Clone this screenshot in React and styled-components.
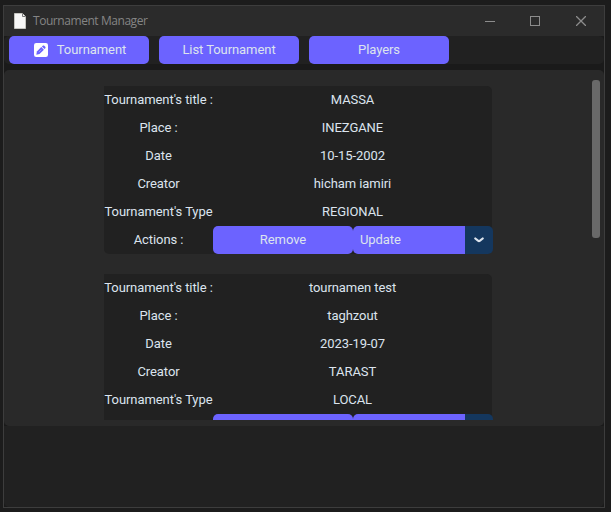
import React from "react";
import styled, { createGlobalStyle } from "styled-components";

const GlobalStyle = createGlobalStyle`
  * { box-sizing: border-box; }
  body { margin: 0; background: #1c1c1c; overflow: hidden; }
`;

const Desktop = styled.div`
  width: 611px;
  height: 512px;
  padding: 5px 6px 4px 3px;
  background: #1c1c1c;
`;

const AppWindow = styled.div`
  width: 602px;
  height: 503px;
  border: 1px solid #3d3d3d;
  background: #1a1a1a;
  display: flex;
  flex-direction: column;
  font: 13px/28px Roboto, sans-serif;
  letter-spacing: -0.07px;
  color: #dce4ee;
`;

const TitleBar = styled.header`
  flex: 0 0 30px;
  display: flex;
  align-items: center;
  padding-left: 10px;
  background: #2b2b2b;
`;

const Title = styled.span`
  margin-left: 7px;
  flex: 1;
  font: 12px/28px "Open Sans", sans-serif;
  letter-spacing: -0.44px;
  color: #858585;
`;

const WindowButton = styled.div`
  width: 46px;
  height: 28px;
  display: flex;
  align-items: center;
  justify-content: center;
  &:first-of-type { padding-left: 1px; }
`;

const Toolbar = styled.nav`
  flex: 0 0 28px;
  display: flex;
  gap: 10px;
  padding-left: 5px;
  background: #212121;
  border-radius: 5px;
`;

const Button = styled.div`
  width: ${(p) => p.$width || 140}px;
  height: 28px;
  display: flex;
  align-items: center;
  justify-content: ${(p) => (p.$align === "left" ? "flex-start" : "center")};
  gap: 9px;
  padding-left: ${(p) => (p.$align === "left" ? 7 : 0)}px;
  background: #6c63ff;
  border-radius: ${(p) => p.$radius || "5px"};
  line-height: 28px;
  white-space: pre;
`;

const IconButton = styled(Button)`
  padding-left: 2px;
`;

const ListPanel = styled.main`
  flex: 0 0 356px;
  margin-top: 6px;
  display: flex;
  justify-content: space-between;
  padding: 10px 4px 6px 100px;
  background: #292929;
  border-radius: 5px;
`;

const Viewport = styled.div`
  width: 389px;
  height: 340px;
  padding-top: 6px;
  overflow: hidden;
`;

const Card = styled.section`
  width: 388px;
  height: 168px;
  margin-bottom: 20px;
  display: grid;
  grid-template-columns: 109px 280px;
  grid-auto-rows: 28px;
  background: #212121;
  border-radius: 0 5px 5px 5px;
`;

const Cell = styled.div`
  text-align: center;
  white-space: nowrap;
`;

const Value = styled(Cell)`
  width: 279px;
`;

const Actions = styled.div`
  display: flex;
`;

const MenuArrow = styled.div`
  width: 28px;
  height: 28px;
  display: flex;
  align-items: center;
  justify-content: center;
  background: #14375e;
  border-radius: 0 5px 5px 0;
`;

const ScrollThumb = styled.div`
  width: 8px;
  height: 158px;
  background: #696969;
  border-radius: 3px;
`;

const Footer = styled.footer`
  flex: 0 0 81px;
  background: #212121;
  border-radius: 0 0 5px 5px;
`;

const DocumentIcon = () => (
  <svg width="12" height="16" viewBox="0 0 12 16">
    <path d="M.5.5h8l3 3v12H.5z" fill="#f7f7f7" stroke="#c5c5c0" />
    <path d="M8.5.5v3h3" fill="none" stroke="#777" />
  </svg>
);

const PencilIcon = () => (
  <svg width="14" height="14" viewBox="0 0 14 14">
    <rect width="14" height="14" rx="2.2" fill="#fff" />
    <path d="M2.3 11.7l.6-3.2 4.4-4.4 2.6 2.6-4.4 4.4z" fill="#6c63ff" />
    <path d="M7.9 3.5l.9-.8c.4-.4 1-.4 1.4 0l1.1 1.1c.4.4.4 1 0 1.4l-.8.9z" fill="#6c63ff" />
    <path d="M4.8 9.2l2.6-2.6" stroke="#c8c4ff" strokeWidth=".5" />
  </svg>
);

const ChevronIcon = () => (
  <svg width="10" height="6" viewBox="0 0 10 6">
    <path
      d="M1.3 1.5L4 3.7Q5 4.4 6 3.7L8.7 1.5"
      fill="none"
      stroke="#dce4ee"
      strokeWidth="2.2"
      strokeLinecap="round"
    />
  </svg>
);

const tournaments = [
  { title: "MASSA", place: "INEZGANE", date: "10-15-2002", creator: "hicham iamiri", type: "REGIONAL" },
  { title: "tournamen test", place: "taghzout", date: "2023-19-07", creator: "TARAST", type: "LOCAL" },
];

const TournamentCard = ({ item }) => (
  <Card>
    <Cell>Tournament's title :</Cell>
    <Value>{item.title}</Value>
    <Cell>Place :</Cell>
    <Value>{item.place}</Value>
    <Cell>Date</Cell>
    <Value>{item.date}</Value>
    <Cell>Creator</Cell>
    <Value>{item.creator}</Value>
    <Cell>Tournament's Type</Cell>
    <Value>{item.type}</Value>
    <Cell>Actions :</Cell>
    <Actions>
      <Button>Remove</Button>
      <Button $width={112} $align="left" $radius="5px 0 0 5px">Update</Button>
      <MenuArrow><ChevronIcon /></MenuArrow>
    </Actions>
  </Card>
);

export default function App() {
  return (
    <Desktop>
      <GlobalStyle />
      <AppWindow>
        <TitleBar>
          <DocumentIcon />
          <Title>Tournament Manager</Title>
          <WindowButton>
            <svg width="10" height="10"><path d="M0 5.5h10" stroke="#8c8c8c" /></svg>
          </WindowButton>
          <WindowButton>
            <svg width="10" height="10"><rect x=".5" y=".5" width="9" height="9" fill="none" stroke="#8c8c8c" /></svg>
          </WindowButton>
          <WindowButton>
            <svg width="10" height="10"><path d="M0 0l10 10M10 0L0 10" stroke="#8c8c8c" strokeWidth="1.3" /></svg>
          </WindowButton>
        </TitleBar>
        <Toolbar>
          <IconButton><PencilIcon />Tournament</IconButton>
          <Button>List Tournament</Button>
          <Button>Players</Button>
        </Toolbar>
        <ListPanel>
          <Viewport>
            {tournaments.map((item) => (
              <TournamentCard key={item.title} item={item} />
            ))}
          </Viewport>
          <ScrollThumb />
        </ListPanel>
        <Footer />
      </AppWindow>
    </Desktop>
  );
}
